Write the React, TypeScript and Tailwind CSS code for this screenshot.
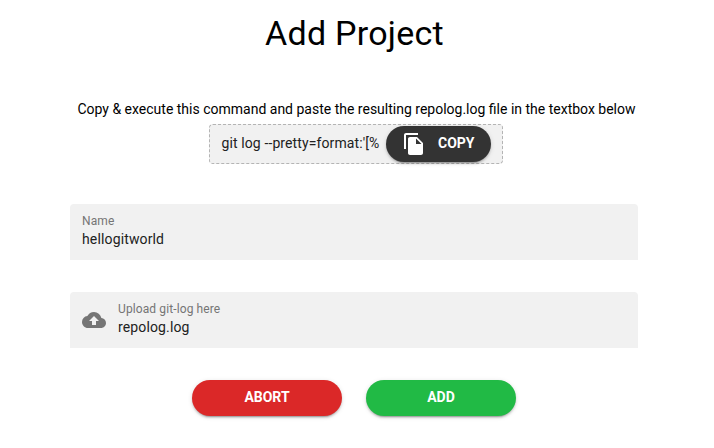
import type { ReactNode } from "react";
import { MdFileCopy, MdCloudUpload } from "react-icons/md";

function Field({ label, value, icon }: { label: string; value: string; icon?: ReactNode }) {
  return (
    <div className="flex h-14 w-[568px] items-center rounded-t bg-[#f1f1f1] pl-3">
      {icon}
      <div className="pb-[3px]">
        <div className="text-[12px] leading-4 tracking-[0.11px] text-[#757575]">{label}</div>
        <div className="text-[14px] leading-5 tracking-[0.14px] text-[#212121]">{value}</div>
      </div>
    </div>
  );
}

const shadow =
  "shadow-[0_3px_1px_-2px_rgba(0,0,0,0.2),0_2px_2px_0_rgba(0,0,0,0.14),0_1px_5px_0_rgba(0,0,0,0.12)]";

export default function App() {
  return (
    <main className="h-[448px] w-[714px] overflow-hidden bg-white font-['Roboto',sans-serif] text-black">
      <h1 className="pt-[13px] pr-[5px] text-center text-[34px] leading-10 tracking-[0.25px]">Add Project</h1>
      <p className="mt-[46px] pr-px text-center text-[14px] leading-5">
        Copy &amp; execute this command and paste the resulting repolog.log file in the textbox below
      </p>
      <div className="ml-[209px] mt-[5px] flex h-10 w-[294px] items-center justify-between rounded border border-dashed border-[#b4b4b4] bg-[#f1f1f1] pl-[11.5px] pr-[11px]">
        <span className="pb-0.5 text-[14px] tracking-[0.11px] text-[#212121]">git log --pretty=format:'[%</span>
        <button className={`flex h-9 w-[105px] items-center rounded-full bg-[#333] pl-4 text-[14px] font-bold text-white ${shadow}`}>
          <MdFileCopy className="mr-3 size-6" />
          <span className="pb-0.5">COPY</span>
        </button>
      </div>
      <div className="ml-[70px] mt-10 flex flex-col gap-8">
        <Field label="Name" value="hellogitworld" />
        <Field label="Upload git-log here" value="repolog.log" icon={<MdCloudUpload className="mr-3 size-6 text-[#757575]" />} />
      </div>
      <div className="ml-[192px] mt-8 flex gap-6 text-[14px] font-bold text-white">
        <button className={`h-9 w-[150px] rounded-full bg-[#db2828] pb-0.5 ${shadow}`}>ABORT</button>
        <button className={`h-9 w-[150px] rounded-full bg-[#21ba45] pb-0.5 ${shadow}`}>ADD</button>
      </div>
    </main>
  );
}
